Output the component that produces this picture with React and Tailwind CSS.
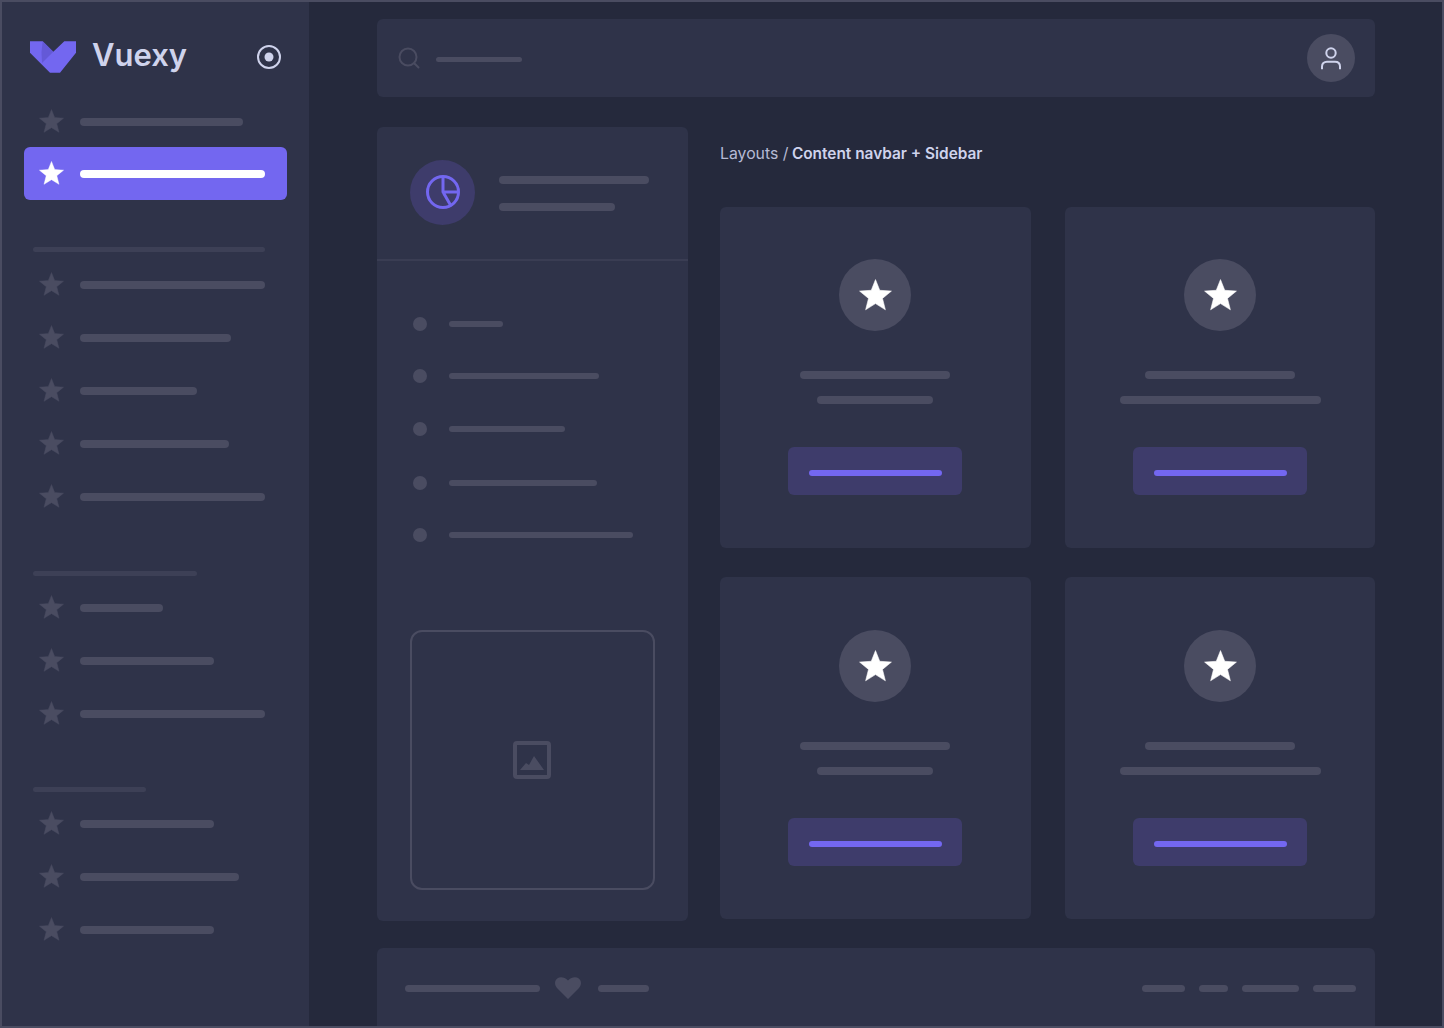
const BAR = "bg-[#4a4c61]";

function Star({ className }) {
  return (
    <svg viewBox="0 0 24 24" className={className} fill="currentColor" stroke="currentColor" strokeWidth="0.4" strokeLinejoin="round">
      <polygon points="12,0.4 15.1,8.2 23.6,8.8 17.1,14.1 19.2,22.4 12,17.9 4.8,22.4 6.9,14.1 0.4,8.8 8.9,8.2" />
    </svg>
  );
}

function Row({ w }) {
  return (
    <div className="h-[53px] pl-[37px] flex items-center gap-4">
      <Star className="w-[25px] h-[25px] -mt-px shrink-0 text-[#4a4c61]" />
      <div className={`h-2 rounded-full ${BAR}`} style={{ width: w }} />
    </div>
  );
}

function Separator({ w, className }) {
  return <div className={`h-[5px] ml-[31px] rounded-full bg-[#3d4056] ${className}`} style={{ width: w }} />;
}

function Logo() {
  return (
    <svg viewBox="30 41 46 32" className="w-[46px] h-8 shrink-0">
      <path fill="#7367f0" d="M30 41.3H42.7L53.3 51.7L64.3 41.3H76V52.7L60 72.7H50L30 52.7Z" />
      <path fill="#5f54cf" opacity="0.75" d="M42.7 41.3L53.3 51.7L42 63L41.5 52Z" />
    </svg>
  );
}

function Sidebar() {
  return (
    <aside className="w-[307px] shrink-0 bg-[#2f3349]">
      <div className="h-[94px] pt-4 pl-7 pr-[28px] flex items-center">
        <Logo />
        <span className="ml-4 text-[31px] font-semibold text-[#cfd3ec] leading-none -mt-[6px]">Vuexy</span>
        <svg viewBox="0 0 24 24" className="ml-auto w-6 h-6 text-[#cfd3ec]">
          <circle cx="12" cy="12" r="11" fill="none" stroke="currentColor" strokeWidth="2" />
          <circle cx="12" cy="12" r="4.5" fill="currentColor" />
        </svg>
      </div>
      <div className="h-[51px] pl-[37px] flex items-center gap-4">
        <Star className="w-[25px] h-[25px] -mt-px shrink-0 text-[#4a4c61]" />
        <div className={`h-2 rounded-full w-[163px] ${BAR}`} />
      </div>
      <div className="mx-[22px] h-[53px] pl-[15px] rounded-md bg-[#7367f0] flex items-center gap-4">
        <Star className="w-[25px] h-[25px] -mt-px shrink-0 text-white" />
        <div className="h-2 w-[185px] rounded-full bg-white" />
      </div>
      <Separator w={232} className="mt-[47px] mb-[6px]" />
      {[185, 151, 117, 149, 185].map((w, i) => <Row key={i} w={w} />)}
      <Separator w={164} className="mt-[48px] mb-[5px]" />
      {[83, 134, 185].map((w, i) => <Row key={i} w={w} />)}
      <Separator w={113} className="mt-[47px] mb-[5px]" />
      {[134, 159, 134].map((w, i) => <Row key={i} w={w} />)}
    </aside>
  );
}

function Header() {
  return (
    <header className="h-[78px] shrink-0 rounded-md bg-[#2f3349] pl-[21px] pr-5 flex items-center">
      <svg viewBox="0 0 22 22" className="w-[22px] h-[22px] text-[#4a4c61]" fill="none" stroke="currentColor" strokeWidth="2" strokeLinecap="round">
        <circle cx="10" cy="10" r="8.5" />
        <path d="M16.5 16.5L20.5 20.5" />
      </svg>
      <div className={`ml-4 mt-[2px] h-[5px] w-[86px] rounded-full ${BAR}`} />
      <div className="ml-auto w-12 h-12 rounded-full bg-[#4a4c61] flex items-center justify-center">
        <svg viewBox="0 0 24 24" className="w-6 h-6 text-[#cfd3ec]" fill="none" stroke="currentColor" strokeWidth="2">
          <circle cx="12" cy="7" r="4.7" />
          <path d="M3 23.3V20.5C3 17.5 5 15.7 8 15.7H16C19 15.7 21 17.5 21 20.5V23.3" />
        </svg>
      </div>
    </header>
  );
}

function LeftCard() {
  const items = [
    { w: 54, cls: "h-[52px]" },
    { w: 150, cls: "h-[52px]" },
    { w: 116, cls: "h-[54px]" },
    { w: 148, cls: "h-[54px]" },
    { w: 184, cls: "h-[50px]" },
  ];
  return (
    <section className="w-[311px] h-[794px] shrink-0 rounded-md bg-[#2f3349] flex flex-col">
      <div className="h-[134px] shrink-0 border-b-2 border-[#3a3d53] pl-[33px] flex items-center gap-6">
        <div className="w-[65px] h-[65px] -mt-[2px] rounded-full bg-[#3e3c6b] flex items-center justify-center">
          <svg viewBox="0 0 36 36" className="w-9 h-9 text-[#7367f0]" fill="none" stroke="currentColor" strokeWidth="3" strokeLinejoin="round">
            <circle cx="18" cy="18" r="15.5" />
            <path d="M18 2.5V18H33.5M18 18L26.3 32.5" />
          </svg>
        </div>
        <div className="flex flex-col gap-[19px]">
          <div className={`h-2 w-[150px] rounded-full ${BAR}`} />
          <div className={`h-2 w-[116px] rounded-full ${BAR}`} />
        </div>
      </div>
      <div className="mt-[37px] pl-9 flex flex-col">
        {items.map((it, i) => (
          <div key={i} className={`${it.cls} flex items-center gap-[22px]`}>
            <div className={`w-[14px] h-[14px] rounded-full ${BAR}`} />
            <div className={`h-[6px] rounded-full ${BAR}`} style={{ width: it.w }} />
          </div>
        ))}
      </div>
      <div className="mt-[70px] ml-[33px] w-[245px] h-[260px] pr-[2px] rounded-xl border-2 border-[#4a4c61] flex items-center justify-center">
        <svg viewBox="0 0 38 38" className="w-[38px] h-[38px] text-[#4a4c61]">
          <rect x="2" y="2" width="34" height="34" rx="2" fill="none" stroke="currentColor" strokeWidth="4" />
          <path fill="currentColor" d="M7 29L13 22L16 24L21 15L31 29Z" />
        </svg>
      </div>
    </section>
  );
}

function Card({ wide, className }) {
  return (
    <div className={`rounded-md bg-[#2f3349] flex flex-col items-center justify-center ${className}`}>
      <div className="w-[72px] h-[72px] rounded-full bg-[#4a4c61] flex items-center justify-center">
        <Star className="w-[33px] h-[33px] text-white" />
      </div>
      <div className={`mt-10 h-2 w-[150px] rounded-full ${BAR}`} />
      <div className={`mt-[17px] h-2 rounded-full ${BAR} ${wide ? "w-[201px]" : "w-[116px]"}`} />
      <div className="mt-[43px] w-[174px] h-12 pt-1 rounded-md bg-[#3e3c6b] flex items-center justify-center">
        <div className="h-[6px] w-[133px] rounded-full bg-[#7367f0]" />
      </div>
    </div>
  );
}

function Footer() {
  return (
    <footer className="mt-[27px] h-[78px] shrink-0 pt-[2px] rounded-t-md bg-[#2f3349] pl-7 pr-[19px] flex items-center">
      <div className={`h-[7px] w-[135px] rounded-full ${BAR}`} />
      <svg viewBox="0 0 26 22" className="ml-[15px] w-[26px] h-[22px] text-[#4a4c61]" fill="currentColor">
        <path d="M13 22L2 11C-0.8 8 -0.5 3.5 2.2 1.5C5 -0.6 9.5 -0.2 13 3.6C16.5 -0.2 21 -0.6 23.8 1.5C26.5 3.5 26.8 8 24 11Z" />
      </svg>
      <div className={`ml-[17px] h-[7px] w-[51px] rounded-full ${BAR}`} />
      <div className="ml-auto flex gap-[14px]">
        {[43, 29, 57, 43].map((w, i) => (
          <div key={i} className={`h-[7px] rounded-full ${BAR}`} style={{ width: w }} />
        ))}
      </div>
    </footer>
  );
}

export default function App() {
  return (
    <div className="w-[1444px] h-[1028px] border-2 border-[#4a4c61] bg-[#25293c] flex overflow-hidden font-['Inter',sans-serif]">
      <Sidebar />
      <main className="flex-1 min-w-0 pl-[68px] pr-[67px] pt-[17px] flex flex-col">
        <Header />
        <div className="mt-[30px] flex gap-8 shrink-0">
          <LeftCard />
          <div className="flex-1 min-w-0">
            <div className="h-20 pt-[17px] text-[15.8px] leading-5 text-[#b6bad4]">
              Layouts / <span className="-ml-px text-[15.4px] font-semibold text-[#cfd3ec]">Content navbar + Sidebar</span>
            </div>
            <div className="grid grid-cols-[311px_310px] grid-rows-[341px_342px] gap-x-[34px] gap-y-[29px]">
              <Card className="pr-px pb-px" />
              <Card wide className="pb-px" />
              <Card className="pr-px" />
              <Card wide />
            </div>
          </div>
        </div>
        <Footer />
      </main>
    </div>
  );
}
